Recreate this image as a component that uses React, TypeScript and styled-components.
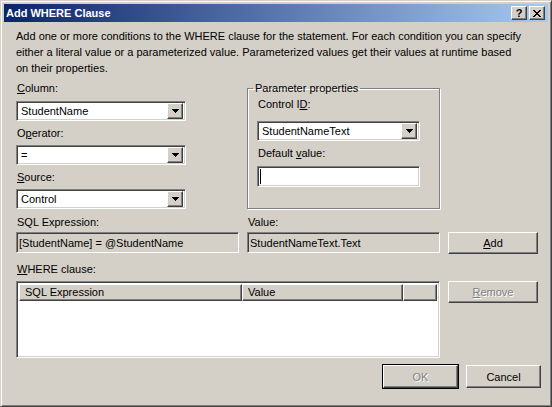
import React from 'react';
import styled, { createGlobalStyle, css } from 'styled-components';

const face = '#d4d0c8';

const GlobalStyle = createGlobalStyle`
  html, body {
    margin: 0;
    padding: 0;
    background: ${face};
  }
  body {
    font-family: "Liberation Sans", Arial, sans-serif;
    font-size: 11px;
    color: #000;
  }
  * {
    box-sizing: border-box;
  }
`;

const sunken = css`
  border: 1px solid;
  border-color: #808080 #fff #fff #808080;
  box-shadow: inset 1px 1px 0 #404040, inset -1px -1px 0 ${face};
`;

const raised = css`
  border: 1px solid;
  border-color: #fff #404040 #404040 #fff;
  box-shadow: inset -1px -1px 0 #808080, inset 1px 1px 0 ${face};
`;

const Window = styled.div`
  width: 552px;
  height: 407px;
  background: ${face};
  border: 1px solid;
  border-color: ${face} #404040 #404040 ${face};
  box-shadow: inset 1px 1px 0 #fff, inset -1px -1px 0 #808080;
  padding: 3px;
  display: flex;
  flex-direction: column;
`;

const TitleBar = styled.div`
  height: 18px;
  display: flex;
  align-items: center;
  padding: 0 3px 0 2px;
  background: linear-gradient(90deg, #0a246a 0%, #a6caf0 100%);
  color: #fff;
  font-weight: bold;
`;

const Title = styled.span`
  flex: 1;
`;

const CaptionButton = styled.button<{ $gap?: boolean }>`
  ${raised};
  width: 16px;
  height: 14px;
  padding: 0;
  margin-left: ${p => (p.$gap ? '2px' : '0')};
  background: ${face};
  display: flex;
  align-items: center;
  justify-content: center;
  font-family: inherit;
  font-size: 11px;
  font-weight: bold;
  line-height: 1;
  color: #000;
`;

const Body = styled.div`
  flex: 1;
  display: flex;
  flex-direction: column;
`;

const Grid = styled.div`
  display: grid;
  grid-template-columns: 223px 193px 90px;
  column-gap: 8px;
  padding: 0 11px 0 12px;
`;

const Description = styled.p`
  grid-column: 1 / -1;
  margin: 6px 0 0;
  line-height: 16px;
  white-space: nowrap;
`;

const Fields = styled.div`
  margin-top: 5px;
  display: flex;
  flex-direction: column;
`;

const Label = styled.label<{ $top?: number; $bottom?: number }>`
  display: block;
  height: 14px;
  line-height: 14px;
  padding-left: 1px;
  margin-top: ${p => p.$top ?? 0}px;
  margin-bottom: ${p => p.$bottom ?? 0}px;
  white-space: nowrap;
`;

const Combo = styled.div<{ $width: number }>`
  ${sunken};
  width: ${p => p.$width}px;
  height: 20px;
  background: #fff;
  display: flex;
  align-items: center;
  padding: 2px;
`;

const ComboText = styled.span`
  flex: 1;
  padding-left: 2px;
`;

const DropButton = styled.span`
  ${raised};
  width: 16px;
  height: 16px;
  background: ${face};
  display: flex;
  align-items: center;
  justify-content: center;
`;

const GroupBox = styled.fieldset`
  margin: 5px 0 0;
  width: 193px;
  height: 128px;
  border: 1px solid #808080;
  box-shadow: inset 1px 1px 0 #fff, 1px 1px 0 #fff;
  padding: 0 0 0 9px;
  display: flex;
  flex-direction: column;
`;

const Legend = styled.legend`
  padding: 0 2px;
  margin-left: -4px;
  line-height: 14px;
`;

const TextBox = styled.div<{ $width?: number; $disabled?: boolean }>`
  ${sunken};
  width: ${p => (p.$width ? `${p.$width}px` : '100%')};
  height: 21px;
  background: ${p => (p.$disabled ? face : '#fff')};
  display: flex;
  align-items: center;
  padding: 2px 2px 2px 2px;
  white-space: nowrap;
`;

const Caret = styled.span`
  width: 1px;
  height: 15px;
  background: #000;
`;

const Cell = styled.div<{ $top?: number; $span?: boolean }>`
  margin-top: ${p => p.$top ?? 0}px;
  grid-column: ${p => (p.$span ? '1 / 3' : 'auto')};
`;

const PushButton = styled.button<{ $width?: number; $height?: number; $default?: boolean }>`
  ${raised};
  width: ${p => p.$width ?? 90}px;
  height: ${p => p.$height ?? 22}px;
  padding: 0;
  background: ${face};
  font-family: inherit;
  font-size: 11px;
  color: #000;
  ${p =>
    p.$default &&
    css`
      outline: 1px solid #000;
      outline-offset: 0;
      border-color: #fff #404040 #404040 #fff;
      box-shadow: inset -1px -1px 0 #808080, inset 1px 1px 0 ${face}, 0 0 0 1px #000;
    `}
  &:disabled {
    color: #808080;
    text-shadow: 1px 1px 0 #fff;
  }
`;

const ListView = styled.div`
  ${sunken};
  height: 77px;
  background: #fff;
  padding: 2px;
`;

const HeaderRow = styled.div`
  display: flex;
  height: 17px;
`;

const HeaderCell = styled.div<{ $width?: number }>`
  ${raised};
  background: ${face};
  ${p => (p.$width ? `width: ${p.$width}px;` : 'flex: 1;')}
  line-height: 15px;
  padding-left: 5px;
  white-space: nowrap;
`;

const Footer = styled.div`
  display: flex;
  justify-content: flex-end;
  gap: 8px;
  padding: 0 7px 0 0;
  margin-top: 7px;
`;

const closeGlyph = [
  'XX....XX',
  '.XX..XX.',
  '..XXXX..',
  '...XX...',
  '..XXXX..',
  '.XX..XX.',
  'XX....XX',
];

const CloseIcon = () => (
  <svg width="8" height="7" viewBox="0 0 8 7" shapeRendering="crispEdges">
    {closeGlyph.flatMap((row, y) =>
      row.split('').map((c, x) => (c === 'X' ? <rect key={`${x}-${y}`} x={x} y={y} width="1" height="1" fill="#000" /> : null)),
    )}
  </svg>
);

const Arrow = () => (
  <svg width="7" height="4" viewBox="0 0 7 4" shapeRendering="crispEdges">
    <rect x="0" y="0" width="7" height="1" fill="#000" />
    <rect x="1" y="1" width="5" height="1" fill="#000" />
    <rect x="2" y="2" width="3" height="1" fill="#000" />
    <rect x="3" y="3" width="1" height="1" fill="#000" />
  </svg>
);

const ComboBox = ({ value, width }: { value: string; width: number }) => (
  <Combo $width={width}>
    <ComboText>{value}</ComboText>
    <DropButton>
      <Arrow />
    </DropButton>
  </Combo>
);

export default function App() {
  return (
    <>
      <GlobalStyle />
      <Window>
        <TitleBar>
          <Title>Add WHERE Clause</Title>
          <CaptionButton>?</CaptionButton>
          <CaptionButton $gap>
            <CloseIcon />
          </CaptionButton>
        </TitleBar>
        <Body>
          <Grid>
            <Description>
              Add one or more conditions to the WHERE clause for the statement. For each condition you can specify
              <br />
              either a literal value or a parameterized value. Parameterized values get their values at runtime based
              <br />
              on their properties.
            </Description>

            <Fields>
              <Label $bottom={6}>
                <u>C</u>olumn:
              </Label>
              <ComboBox value="StudentName" width={170} />
              <Label $top={5} $bottom={5}>
                O<u>p</u>erator:
              </Label>
              <ComboBox value="=" width={170} />
              <Label $top={5} $bottom={5}>
                <u>S</u>ource:
              </Label>
              <ComboBox value="Control" width={170} />
            </Fields>

            <GroupBox>
              <Legend>Parameter properties</Legend>
              <Label $top={2} $bottom={10}>
                Control I<u>D</u>:
              </Label>
              <ComboBox value="StudentNameText" width={163} />
              <Label $top={5} $bottom={6}>
                Default <u>v</u>alue:
              </Label>
              <TextBox $width={163}>
                <Caret />
              </TextBox>
            </GroupBox>
            <div />

            <Label $top={6}>SQL Expression:</Label>
            <Label $top={6}>Value:</Label>
            <div />

            <Cell $top={3}>
              <TextBox $disabled>[StudentName] = @StudentName</TextBox>
            </Cell>
            <Cell $top={3}>
              <TextBox $disabled>StudentNameText.Text</TextBox>
            </Cell>
            <Cell $top={3}>
              <PushButton>
                <u>A</u>dd
              </PushButton>
            </Cell>

            <Label $top={8} style={{ gridColumn: '1 / -1' }}>
              <u>W</u>HERE clause:
            </Label>

            <Cell $top={5} $span>
              <ListView>
                <HeaderRow>
                  <HeaderCell $width={223}>SQL Expression</HeaderCell>
                  <HeaderCell $width={161}>Value</HeaderCell>
                  <HeaderCell />
                </HeaderRow>
              </ListView>
            </Cell>
            <Cell $top={5}>
              <PushButton disabled>
                <u>R</u>emove
              </PushButton>
            </Cell>
          </Grid>
          <Footer>
            <PushButton $width={75} $height={23} $default disabled>
              OK
            </PushButton>
            <PushButton $width={75} $height={23}>
              Cancel
            </PushButton>
          </Footer>
        </Body>
      </Window>
    </>
  );
}
